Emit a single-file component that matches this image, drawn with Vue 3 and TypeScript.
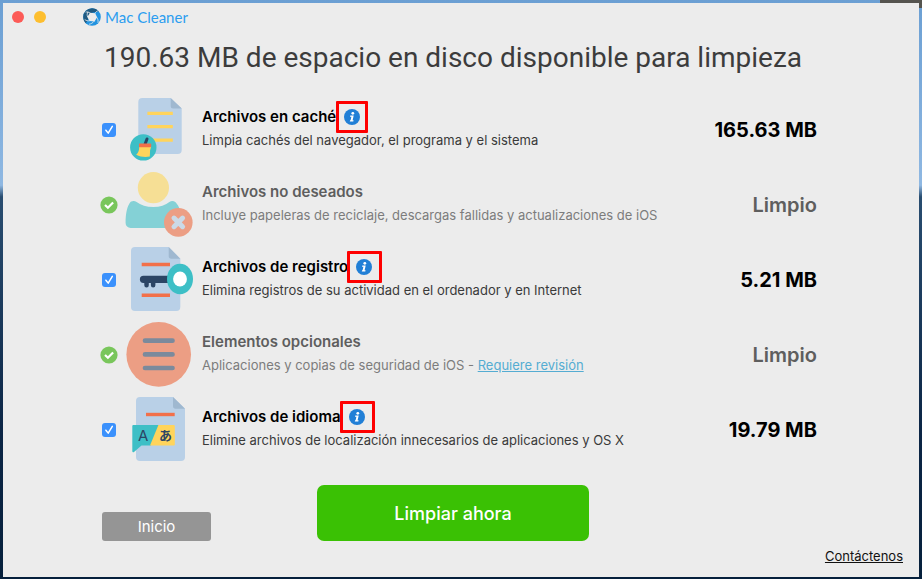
<script setup lang="ts">
import { ref } from 'vue'

type Kind = 'cache' | 'junk' | 'log' | 'optional' | 'language'

interface Category {
  kind: Kind
  title: string
  text: string
  link?: string
  size: string
  clean: boolean
  wide?: boolean
}

const categories: Category[] = [
  { kind: 'cache', title: 'Archivos en caché', text: 'Limpia cachés del navegador, el programa y el sistema', size: '165.63 MB', clean: false },
  { kind: 'junk', title: 'Archivos no deseados', text: 'Incluye papeleras de reciclaje, descargas fallidas y actualizaciones de iOS', size: 'Limpio', clean: true },
  { kind: 'log', title: 'Archivos de registro', text: 'Elimina registros de su actividad en el ordenador y en Internet', size: '5.21 MB', clean: false, wide: true },
  { kind: 'optional', title: 'Elementos opcionales', text: 'Aplicaciones y copias de seguridad de iOS - ', link: 'Requiere revisión', size: 'Limpio', clean: true },
  { kind: 'language', title: 'Archivos de idioma', text: 'Elimine archivos de localización innecesarios de aplicaciones y OS X', size: '19.79 MB', clean: false, wide: true },
]

const selected = ref<Kind[]>(['cache', 'log', 'language'])
</script>

<template>
  <div class="desktop">
    <main class="window">
      <header class="titlebar">
        <div class="lights">
          <button class="light close" type="button" aria-label="Cerrar"></button>
          <button class="light minimize" type="button" aria-label="Minimizar"></button>
        </div>
        <div class="brand">
          <svg width="18" height="18" viewBox="0 0 18 18" aria-hidden="true">
            <circle cx="9" cy="9" r="8.800" fill="#2293e0" />
            <path d="M9 .2A8.800 8.800 0 0 0 .2 9c0 2.500 1 4.700 2.600 6.300L6.500 9l3-4.500 6.300-1A8.800 8.800 0 0 0 9 .2z" fill="#1f5a82" />
            <path d="M7 4.800l5.200.5 1.900 3.900-2.600 4.200-5-.3-2.200-4.100z" fill="#ececec" />
            <path d="M2.600 4.200c1.300-.5 2.900-.2 4.600.9M12 5.600c.5-1.600 1.700-2.700 3.600-3M13.700 9.200c1.200 1.500 1.700 3.500 1.200 5.600M11.300 13.100c-1.500 1.800-3.200 2.800-5.400 3.200M6.700 12.800c-1.900.2-3.500-.2-5-1.300M4.700 9c-.7-1.600-.7-3.400.2-5.200" fill="none" stroke="#ececec" stroke-width=".8" />
          </svg>
          <span>Mac Cleaner</span>
        </div>
      </header>

      <h1>190.63 MB de espacio en disco disponible para limpieza</h1>

      <ul class="list">
        <li v-for="c in categories" :key="c.kind" class="row" :class="{ clean: c.clean }">
          <svg v-if="c.clean" class="done" width="18" height="18" viewBox="0 0 18 18" role="img" aria-label="Limpio">
            <circle cx="9" cy="9" r="8.600" fill="#79c65b" />
            <path d="M5 9l2.900 2.800 5.200-5.400" fill="none" stroke="#fff" stroke-width="2.200" />
          </svg>
          <span v-else class="check">
            <input :id="c.kind" v-model="selected" type="checkbox" :value="c.kind" />
            <svg v-if="selected.includes(c.kind)" width="14" height="14" viewBox="0 0 14 14" aria-hidden="true">
              <path d="M3.900 7.200l2.300 2.900 4.100-6.700" fill="none" stroke="#fff" stroke-width="1.500" stroke-linecap="round" stroke-linejoin="round" />
            </svg>
          </span>

          <svg class="art" width="72" height="75" viewBox="0 0 72 75" aria-hidden="true">
            <g v-if="c.kind === 'cache'">
              <path d="M18.300 5h28.400l11 10.500V57a4 4 0 0 1-4 4H18.300a4 4 0 0 1-4-4V9a4 4 0 0 1 4-4z" fill="#b9d0e7" />
              <path d="M46.700 5l11 10.500h-8.500a2.500 2.500 0 0 1-2.500-2.500z" fill="#9fb8d0" />
              <path d="M23.400 20.400h25.400M23.400 33.700h25.400M23.400 47.200h25.400" stroke="#ffd45c" stroke-width="3.200" />
              <circle cx="19.300" cy="54.400" r="13.200" fill="#3dbfc6" />
              <path d="M23 46l-1.900 5" stroke="#2c4565" stroke-width="3" stroke-linecap="round" />
              <path d="M15.300 54h11.800l-1 3.300-.3 6.300c-4.800 1-9.500.3-13.600-1.800 2-1.800 3-4.300 3.100-7.800z" fill="#ffd45c" />
              <rect x="15" y="50.500" width="12.200" height="3.700" rx=".6" fill="#f2704a" />
            </g>
            <g v-else-if="c.kind === 'junk'">
              <path d="M6.700 33.800c1.500-.9 3.900-1.200 5.500-.1 4.700 3.400 10.300 5.300 17.100 5.300s12-1.900 16.500-5.300c1.600-1.100 4-.8 5.500.3C55.500 38 57.700 45.300 57.700 54v6H6.600a5 5 0 0 1-5-5c0-9.300 1.500-17 5.100-21.200z" fill="#84d1d6" />
              <circle cx="29.400" cy="19.700" r="15.600" fill="#f6df95" />
              <circle cx="54.300" cy="54.400" r="14.300" fill="#ec9e84" />
              <path d="M50 50.100l8.600 8.600M58.600 50.100L50 58.700" stroke="#cbdae7" stroke-width="5" stroke-linecap="round" />
            </g>
            <g v-else-if="c.kind === 'log'">
              <path d="M11 4h33.700l11.600 11.700V64a4 4 0 0 1-4 4H11a4 4 0 0 1-4-4V8a4 4 0 0 1 4-4z" fill="#b9d0e7" />
              <path d="M44.700 4l11.600 11.700h-9a2.600 2.600 0 0 1-2.600-2.600z" fill="#9fb8d0" />
              <path d="M17.700 21.500H46M17.700 52.200H46" stroke="#f2704a" stroke-width="3.500" />
              <path d="M19.500 32.700H46V40H31.400v2.300a2.200 2.200 0 0 1-4.500 0V40h-2.100v2.300a2.200 2.200 0 0 1-4.500 0V40h-.8a3.600 3.600 0 0 1 0-7.300z" fill="#2c4565" />
              <ellipse cx="56" cy="36" rx="13" ry="15.200" fill="#3dbfc6" />
              <ellipse cx="56" cy="36" rx="6.900" ry="7.600" fill="#fff" />
            </g>
            <g v-else-if="c.kind === 'optional'">
              <circle cx="34.700" cy="36.400" r="32.300" fill="#ec9e84" />
              <path d="M21 22.700h27.500M21 36.400h27.500M21 50h27.500" stroke="#7b8a9c" stroke-width="4.700" stroke-linecap="round" />
            </g>
            <g v-else>
              <path d="M16 4h33l12 11.700V64a4 4 0 0 1-4 4H16a4 4 0 0 1-4-4V8a4 4 0 0 1 4-4z" fill="#b9d0e7" />
              <path d="M49 4l12 11.700h-9.400a2.600 2.600 0 0 1-2.600-2.600z" fill="#9fb8d0" />
              <path d="M22 21.500h28.700" stroke="#f2704a" stroke-width="3.400" />
              <path d="M9.500 32h26L27 52.600H17.500L10 59c-.7.600-1.700 0-1.700-1V33.200c0-.7.500-1.200 1.200-1.200z" fill="#3dbfc6" />
              <path d="M34.400 32h15.200c.7 0 1.200.5 1.200 1.200v18.200c0 .7-.5 1.200-1.200 1.200H26z" fill="#ffd45c" />
              <text class="glyph" x="19.300" y="48" font-size="15">A</text>
              <text class="glyph kana" x="41.600" y="47" font-size="13">あ</text>
            </g>
          </svg>

          <div class="info">
            <div class="heading">
              <h2><label :for="c.clean ? undefined : c.kind">{{ c.title }}</label></h2>
              <button v-if="!c.clean" class="tip" :class="{ wide: c.wide }" type="button" aria-label="Información">
                <svg width="16" height="16" viewBox="0 0 16 16" aria-hidden="true">
                  <circle cx="8" cy="8" r="8" fill="#217fd6" />
                  <circle cx="8.800" cy="4.300" r="1.400" fill="#fff" />
                  <path d="M6.300 6.400h3.400l-1.100 4.800h1l-.3 1.300H5.800l.3-1.300h.5l.8-3.500H6z" fill="#fff" />
                </svg>
              </button>
            </div>
            <p>{{ c.text }}<a v-if="c.link" href="#">{{ c.link }}</a></p>
          </div>

          <strong class="size">{{ c.size }}</strong>
        </li>
      </ul>

      <div class="actions">
        <button class="home" type="button">Inicio</button>
        <button class="run" type="button">Limpiar ahora</button>
      </div>
      <footer class="footer"><a href="#">Contáctenos</a></footer>
    </main>
  </div>
</template>

<style>
body {
  margin: 0;
}
</style>

<style scoped>
.desktop {
  box-sizing: border-box;
  min-height: 100vh;
  display: flex;
  padding: 3px 3px 2px;
  background:
    linear-gradient(#55544f, #55544f) top right / 42px 8px no-repeat,
    linear-gradient(#6b9fd3 0, #8fb8e2 32%, #294d70 34%, #0b2545 75%, #06203c 100%);
  font-family: Inter, "Liberation Sans", sans-serif;
  color: #000;
}
.window {
  flex: 1;
  min-width: 0;
  display: flex;
  flex-direction: column;
  background: #ececec;
}
button {
  padding: 0;
  border: 0;
  font-family: inherit;
}
.titlebar {
  display: flex;
  align-items: center;
  gap: 37px;
  height: 28px;
  padding-left: 9px;
}
.lights {
  display: flex;
  gap: 10px;
}
.light {
  width: 12px;
  height: 12px;
  border-radius: 50%;
}
.close {
  background: #fc5b57;
}
.minimize {
  background: #fdbe2f;
}
.brand {
  display: flex;
  align-items: center;
  gap: 4px;
  font: 15px/18px Lato, sans-serif;
  color: #2b9df0;
}
h1 {
  margin: 9px 101px 17px;
  font-family: Roboto, "Liberation Sans", sans-serif;
  font-size: 28px;
  line-height: 36px;
  font-weight: 400;
  color: #3c3c3c;
  white-space: nowrap;
}
.list {
  margin: 0;
  padding: 0 102px 0 97px;
  list-style: none;
}
.row {
  display: grid;
  grid-template-columns: 18px 72px 1fr auto;
  align-items: center;
  height: 75px;
}
.art {
  margin-left: 6px;
}
.check,
.done,
.size {
  margin-bottom: 2px;
}
.check {
  position: relative;
  justify-self: center;
  width: 14px;
  height: 14px;
}
.check input {
  appearance: none;
  display: block;
  width: 14px;
  height: 14px;
  margin: 0;
  border-radius: 3px;
  background: #fff;
}
.check input:checked {
  background: #3b91fc;
}
.check svg {
  position: absolute;
  inset: 0;
  pointer-events: none;
}
.glyph {
  font-family: Inter, sans-serif;
  fill: #2c4565;
  text-anchor: middle;
}
.kana {
  font-family: "Noto Sans CJK JP", sans-serif;
  font-weight: 700;
}
.info {
  padding: 0 0 5px 12px;
  white-space: nowrap;
}
.heading {
  display: flex;
  align-items: center;
  gap: 8px;
}
h2 {
  margin: 0;
  font-size: 15px;
  line-height: 24px;
  font-weight: 600;
}
.tip {
  position: relative;
  width: 16px;
  height: 16px;
  background: none;
}
.tip svg {
  display: block;
}
.tip::after {
  content: "";
  position: absolute;
  inset: -8px;
  border: 3px solid #fe0000;
  border-radius: 1px;
}
.wide::after {
  inset: -8px -10px -8px -9px;
}
p {
  margin: 0;
  font-size: 13px;
  line-height: 22px;
  color: #3a3a3a;
}
.size {
  font-size: 20px;
  line-height: 24px;
  font-weight: 700;
}
.clean h2,
.clean .size {
  color: #5e5e5e;
}
.clean .size {
  font-weight: 600;
}
.clean p {
  color: #7c7c7c;
}
p a {
  color: #55acd2;
}
.actions {
  display: flex;
  align-items: flex-end;
  gap: 106px;
  margin-top: 17px;
  padding-left: 99px;
}
.home {
  width: 109px;
  height: 29px;
  border-radius: 3px;
  background: #959595;
  color: #fff;
  font-size: 15px;
}
.run {
  width: 272px;
  height: 56px;
  border-radius: 7px;
  background: #3ac104;
  color: #fff;
  font-size: 18px;
  font-weight: 500;
}
.footer {
  margin-top: 5px;
  padding-right: 16px;
  text-align: right;
  font-size: 13px;
  line-height: 20px;
}
.footer a {
  color: #111;
}
</style>
